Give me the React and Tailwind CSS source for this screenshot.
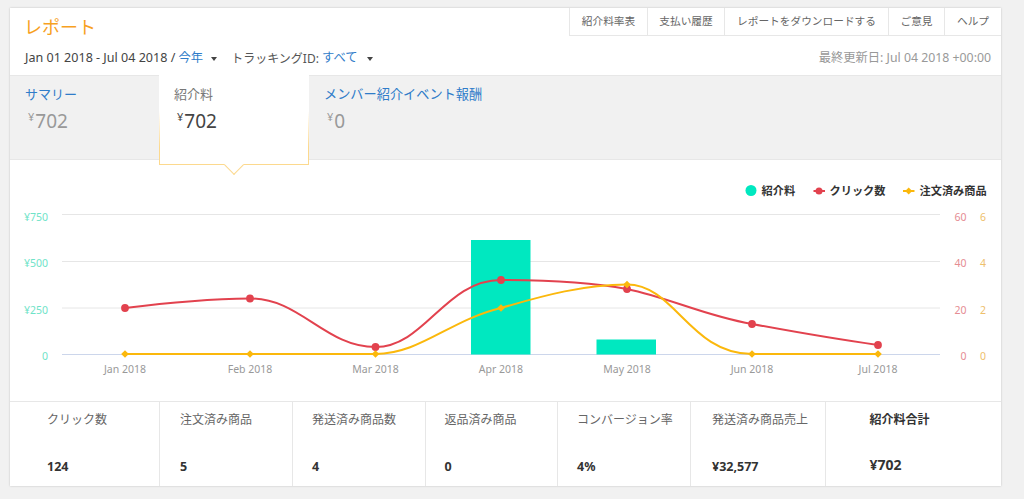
const FONT = '"Noto Sans", "Noto Sans CJK JP", sans-serif';

function Dropdown() {
  return <span className="inline-block w-0 h-0 border-l-[3px] border-r-[3px] border-t-[4px] border-l-transparent border-r-transparent border-t-[#444]" />;
}

function Chart() {
  const xs = [125, 250, 375.5, 501, 627, 752, 878];
  const red = [308, 298.5, 347, 280, 289, 324, 345];
  const yellow = [354, 354, 354, 308, 284.5, 354, 354];
  const months = ['Jan 2018', 'Feb 2018', 'Mar 2018', 'Apr 2018', 'May 2018', 'Jun 2018', 'Jul 2018'];
  const gy = [214.5, 261.5, 308, 354.5];
  const ty = [221, 267, 313.5, 359.5];
  const left = ['¥750', '¥500', '¥250', '0'];
  const r1 = ['60', '40', '20', '0'];
  const r2 = ['6', '4', '2', '0'];
  return (
    <svg width="991" height="241" viewBox="10 160 991 241" className="block" style={{ fontFamily: FONT }}>
      {gy.map((y, i) => (
        <line key={y} x1="62" x2="940" y1={y} y2={y} stroke={i === 3 ? '#ccd6eb' : '#e6e6e6'} strokeWidth="1" />
      ))}
      {left.map((t, i) => (
        <text key={t} x="48" y={ty[i]} textAnchor="end" fontSize="10.5" fill="#6fe3c8">{t}</text>
      ))}
      {r1.map((t, i) => (
        <text key={t} x="966.5" y={ty[i]} textAnchor="end" fontSize="10.5" fill="#e58c92">{t}</text>
      ))}
      {r2.map((t, i) => (
        <text key={t} x="986" y={ty[i]} textAnchor="end" fontSize="10.5" fill="#eec06c">{t}</text>
      ))}
      {months.map((m, i) => (
        <text key={m} x={xs[i]} y="372.5" textAnchor="middle" fontSize="10.5" fill="#999">{m}</text>
      ))}
      <rect x="471" y="240" width="59.5" height="114.5" fill="#00e8c0" />
      <rect x="596.5" y="339.5" width="59.5" height="15" fill="#00e8c0" />
      <path d="M125 308 C165 303 205 299 250 298.5 C300 298 325 347 375.5 347 C425 347 445 280 501 280 C540 280 590 282 627 289 C670 298 705 316 752 324 C795 332 835 339 878 345" fill="none" stroke="#e2424e" strokeWidth="2" />
      <path d="M125 354 L375.5 354 C420 354 450 320 501 308 C545 295 585 284.5 627 284.5 C675 284.5 690 354 752 354 L878 354" fill="none" stroke="#fbb80c" strokeWidth="2" />
      {xs.map((x, i) => <circle key={x} cx={x} cy={red[i]} r="3.9" fill="#e2424e" />)}
      {xs.map((x, i) => (
        <path key={x} d={`M${x} ${yellow[i] - 3.8} L${x + 3.8} ${yellow[i]} L${x} ${yellow[i] + 3.8} L${x - 3.8} ${yellow[i]} Z`} fill="#fbb80c" />
      ))}
      <circle cx="751" cy="190.5" r="5.5" fill="#00e8c0" />
      <text x="761.5" y="195" fontSize="11.2" fontWeight="700" fill="#333">紹介料</text>
      <line x1="813.5" x2="825" y1="191" y2="191" stroke="#e2424e" strokeWidth="2" />
      <circle cx="819" cy="191" r="3.5" fill="#e2424e" />
      <text x="829.5" y="195" fontSize="11.2" fontWeight="700" fill="#333">クリック数</text>
      <line x1="903" x2="914.5" y1="191" y2="191" stroke="#fbb80c" strokeWidth="2" />
      <path d="M908.7 187.5 L912.2 191 L908.7 194.5 L905.2 191 Z" fill="#fbb80c" />
      <text x="919.5" y="195" fontSize="11.2" fontWeight="700" fill="#333">注文済み商品</text>
    </svg>
  );
}

function Stat({ w, pl, label, value, strong }) {
  return (
    <div className={`${w} ${pl} shrink-0 border-r border-[#e7e7e7] last:border-r-0 h-full flex flex-col`}>
      <div className={`text-[12px] leading-4 mt-[10px] ${strong ? 'font-bold text-[#333]' : 'text-[#666]'}`}>{label}</div>
      <div className={`font-bold text-[#333] leading-4 ${strong ? 'text-[14px] mt-[29px]' : 'text-[12.5px] mt-[31px]'}`}>{value}</div>
    </div>
  );
}

function Amount({ children, className }) {
  return (
    <div className={`text-[19px] leading-5 mt-[9px] flex items-start ${className}`}>
      <span className="text-[11px] leading-3 mr-px">¥</span>
      <span>{children}</span>
    </div>
  );
}

export default function App() {
  const links = [
    ['w-[78px]', '紹介料率表'],
    ['w-[77px]', '支払い履歴'],
    ['w-[164px]', 'レポートをダウンロードする'],
    ['w-[56px]', 'ご意見'],
    ['w-[56px]', 'ヘルプ'],
  ];
  return (
    <div className="w-[1024px] h-[499px] bg-[#f1f1f1] pt-2 pl-[10px] overflow-hidden" style={{ fontFamily: FONT }}>
      <div className="w-[991px] h-[478px] bg-white shadow-[0_0_2px_rgba(0,0,0,0.2)]">
        <div className="h-[68px] flex flex-col border-b border-[#e7e7e7]">
          <div className="flex justify-between items-start h-[28px]">
            <div className="text-[18px] leading-5 text-[#f7a11f] ml-[14px] mt-[9px]">レポート</div>
            <div className="flex h-[28px] border-b border-l border-[#e7e7e7]">
              {links.map(([w, t]) => (
                <div key={t} className={`${w} flex items-center justify-center text-[10.7px] text-[#666] border-r border-[#e7e7e7] last:border-r-0`}>{t}</div>
              ))}
            </div>
          </div>
          <div className="flex justify-between items-center h-[19px] mt-[13px] pl-[15px] pr-[10px] text-[12.3px]">
            <div className="flex items-center text-[#444]">
              <span className="text-[12.55px]">Jan 01 2018 - Jul 04 2018 /&nbsp;</span>
              <span className="text-[#2f7cc9]">今年</span>
              <span className="ml-[8px] mr-[14px] flex"><Dropdown /></span>
              <span className="text-[#555] text-[12px]">トラッキングID:&nbsp;</span>
              <span className="text-[#2f7cc9]">すべて</span>
              <span className="ml-[9px] flex"><Dropdown /></span>
            </div>
            <div className="text-[#999]">最終更新日: Jul 04 2018 +00:00</div>
          </div>
        </div>
        <div className="h-[84px] bg-[#f1f1f1] border-b border-[#e7e7e7] flex relative">
          <div className="w-[149px] pl-[15px] pt-[10px]">
            <div className="text-[13px] leading-4 text-[#2f7cc9]">サマリー</div>
            <Amount className="text-[#999] pl-[3px]">702</Amount>
          </div>
          <div className="relative z-10 w-[150px] h-[90px] -mt-px px-px pb-px bg-gradient-to-b from-white from-40% to-[#fcd98e] to-80%">
            <div className="h-full bg-white pl-[14px] pt-[11px]">
              <div className="text-[13px] leading-4 text-[#777]">紹介料</div>
              <Amount className="text-[#444] pl-[3px]">702</Amount>
            </div>
            <div className="absolute left-[68px] -bottom-[7px] w-[14px] h-[14px] bg-white border-r border-b border-[#fcd98e] rotate-45" />
          </div>
          <div className="pl-[15px] pt-[10px]">
            <div className="text-[13.2px] leading-4 text-[#2f7cc9]">メンバー紹介イベント報酬</div>
            <Amount className="text-[#999] pl-[3px]">0</Amount>
          </div>
        </div>
        <Chart />
        <div className="h-[85px] flex border-t border-[#e7e7e7]">
          <Stat w="w-[150px]" pl="pl-[37px]" label="クリック数" value="124" />
          <Stat w="w-[133px]" pl="pl-[20px]" label="注文済み商品" value="5" />
          <Stat w="w-[132.5px]" pl="pl-[19px]" label="発送済み商品数" value="4" />
          <Stat w="w-[132.5px]" pl="pl-[19px]" label="返品済み商品" value="0" />
          <Stat w="w-[133px]" pl="pl-[19px]" label="コンバージョン率" value="4%" />
          <Stat w="w-[134.5px]" pl="pl-[21px]" label="発送済み商品売上" value="¥32,577" />
          <Stat w="w-[176px]" pl="pl-[44px]" label="紹介料合計" value="¥702" strong />
        </div>
      </div>
    </div>
  );
}
